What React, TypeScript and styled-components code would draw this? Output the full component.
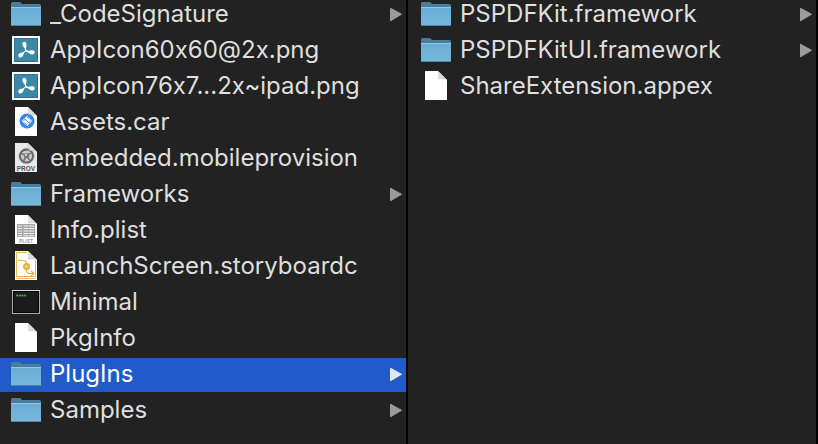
import React from "react";
import styled, { createGlobalStyle } from "styled-components";

const GlobalStyle = createGlobalStyle`
  body {
    margin: 0;
    background: #222222;
    overflow: hidden;
  }
`;

/* The browser is scrolled slightly past its first column and row. */
const Browser = styled.main`
  display: grid;
  grid-template-columns: 1fr 1fr;
  min-height: calc(100vh + 2px);
  margin: -2px 0 0 -2px;
  overflow: hidden;
  background: #222222;
  font-family: Inter, "Liberation Sans", sans-serif;
  font-feature-settings: "calt" 0;
`;

const Column = styled.ul`
  display: flex;
  flex-direction: column;
  gap: 2px;
  min-width: 0;
  margin: 0;
  padding: 0;
  list-style: none;
  border-right: 2px solid #000000;
`;

const Row = styled.button<{ $selected: boolean }>`
  display: flex;
  align-items: center;
  gap: 9px;
  box-sizing: border-box;
  width: 100%;
  height: 34px;
  padding: 0 4px 0 13px;
  border: 0;
  background: ${(p) => (p.$selected ? "#215ac9" : "transparent")};
  color: ${(p) => (p.$selected ? "#ffffff" : "#dfdfdf")};
  font: inherit;
  font-size: 24px;
  line-height: 32px;
  text-align: left;
`;

const IconSlot = styled.span`
  display: flex;
  flex: none;
  justify-content: center;
  width: 30px;

  svg {
    display: block;
  }
`;

const Name = styled.span`
  flex: 1;
  min-width: 0;
  height: 34px;
  overflow: hidden;
  white-space: nowrap;
`;

const Arrow = styled.svg<{ $selected: boolean }>`
  flex: none;
  fill: ${(p) => (p.$selected ? "#dfe7f8" : "#9b9b9b")};
`;

const FolderIcon = () => (
  <svg width="30" height="30" viewBox="0 0 30 30">
    <defs>
      <linearGradient id="folderFront" x1="0" y1="0" x2="0" y2="1">
        <stop offset="0" stopColor="#67add8" />
        <stop offset="1" stopColor="#7ab7da" />
      </linearGradient>
    </defs>
    <path d="M0 7V3.500Q0 2 1.500 2H8.500Q9.500 2 10.200 3L11 4H28.500Q30 4 30 5.500V9H0Z" fill="#4a7d9c" />
    <path d="M0 7H30V24.500Q30 26 28.500 26H1.500Q0 26 0 24.500Z" fill="url(#folderFront)" />
    <path d="M0 7.500H30" stroke="#8dc8e8" strokeWidth="1" />
    <path d="M0.500 25.500H29.500" stroke="#4c87a9" strokeWidth="1" />
  </svg>
);

const ImageIcon = () => (
  <svg width="28" height="30" viewBox="0 1 28 30">
    <rect y="1" width="28" height="28" fill="#ffffff" />
    <rect x="2" y="3" width="24" height="24" fill="#2f7391" />
    <rect x="3" y="4" width="22" height="22" fill="#3c88a9" />
    <g fill="#ffffff">
      <path d="M13.300 16.200C13.300 12.500 10.300 11.500 10.300 8.700C10.300 7.400 11.200 6.700 12.200 6.700C13.600 6.700 14.600 8 14.500 10C14.400 12 13.700 13.500 14.400 16Z" />
      <path d="M13.900 15.100C17 17 18.500 14.600 21 15.300C22.500 15.700 23.100 17 22.600 18.100C22 19.600 20.200 19.800 18.500 18.900C16.700 17.900 15.800 16.700 13.400 16.400Z" />
      <path d="M14.300 15.800C11.200 17.600 12.200 19.900 10.200 21.700C9 22.700 7.600 22.800 6.800 21.900C5.800 20.800 6.300 19 8.100 18.100C10 17.200 11.700 17.400 13.600 15.200Z" />
    </g>
  </svg>
);

const Page = ({ children, fill = "#ffffff" }: { children?: React.ReactNode; fill?: string }) => (
  <svg width="22" height="32" viewBox="0 1 22 32">
    <path d="M0 1H13L22 10V30H0Z" fill={fill} />
    {children}
    <path d="M13 1Q15 2.500 14.300 8.500Q20 7.500 22 11V10Z" fill="#dcdcdc" />
    <path d="M13.800 2V8.700H21" fill="none" stroke="#b5b5b5" strokeWidth="0.600" />
  </svg>
);

const PageLabel = styled.text`
  font-family: "Liberation Sans", sans-serif;
  font-weight: 700;
  text-anchor: middle;
`;

const CarIcon = () => (
  <Page>
    <circle cx="12" cy="15" r="7.500" fill="#3388f5" />
    <path d="M12 9.800L17.200 15L12 20.200L6.800 15Z" fill="#ffffff" />
    <path d="M9.500 12.600L12 15.100M12 10.800L14.500 13.300M9.500 16.800L12 19.200M12 15L14.500 17.500M8 15.500L10.500 13M13.500 17L16 14.500" fill="none" stroke="#3388f5" strokeWidth="0.900" />
  </Page>
);

const ProvisionIcon = () => (
  <Page fill="#e9e9e9">
    <circle cx="11.500" cy="14" r="6.600" fill="#c9c9c9" stroke="#666666" strokeWidth="2" />
    <circle cx="11.500" cy="14" r="7.800" fill="none" stroke="#a0a0a0" strokeWidth="0.600" />
    <path d="M6 11.500L11 13.300L16.500 11M11.300 14L8.500 19M11.500 14L15 18.500" fill="none" stroke="#777777" strokeWidth="1.600" />
    <circle cx="11.500" cy="13.700" r="2.500" fill="#777777" />
    <circle cx="11" cy="13" r="1.100" fill="#dddddd" />
    <PageLabel x="11" y="28.500" fontSize="6.500" fill="#555555">PROV</PageLabel>
  </Page>
);

const PlistIcon = () => (
  <Page>
    <rect x="2" y="10" width="18" height="13" fill="#a5a5a5" />
    <path d="M3 12H7M8.500 12H19M3 14.500H7M8.500 14.500H19M3 17H7M8.500 17H19M3 19.500H7M8.500 19.500H19M3 21.800H7M8.500 21.800H19" stroke="#f5f5f5" strokeWidth="1" />
    <path d="M13.500 10V23" stroke="#a5a5a5" strokeWidth="0.500" />
    <PageLabel x="11" y="28.500" fontSize="5" fill="#a0a0a0">PLIST</PageLabel>
  </Page>
);

const StoryboardIcon = () => (
  <Page>
    <path d="M12.500 2.500H1.500V26.500H20.500V10" fill="none" stroke="#e5b84b" strokeWidth="1" />
    <path d="M1 28.500H21" stroke="#e9c46b" strokeWidth="1" />
    <path d="M3 10.500H8Q11.500 10.500 11.500 14V20Q11.500 23.500 14 23.500H18.500M16 21L18.800 23.500L16 26" fill="none" stroke="#e8b132" strokeWidth="1.200" />
    <circle cx="11.500" cy="16.500" r="3.500" fill="#e8b132" />
    <circle cx="11.500" cy="16.500" r="1.300" fill="#f6dc9b" />
  </Page>
);

const ExecutableIcon = () => (
  <svg width="28" height="30" viewBox="0 1 28 30">
    <rect x="0.500" y="3.500" width="27" height="23" fill="#1b1b1b" stroke="#a4adb0" />
    <path d="M0 3.500H28" stroke="#d0dfe5" />
    <rect x="1.500" y="4.500" width="25" height="21" fill="none" stroke="#050505" />
    <path d="M4 8.500H14.500" stroke="#398d38" strokeWidth="2" strokeDasharray="2 0.700" />
    <path d="M5 8.500H14" stroke="#66c463" strokeWidth="0.800" strokeDasharray="1 1.600" />
  </svg>
);

const icons = {
  folder: FolderIcon,
  image: ImageIcon,
  page: Page,
  car: CarIcon,
  provision: ProvisionIcon,
  plist: PlistIcon,
  storyboard: StoryboardIcon,
  executable: ExecutableIcon,
};

interface Entry {
  name: string;
  icon: keyof typeof icons;
  selected?: boolean;
}

const bundle: Entry[] = [
  { name: "_CodeSignature", icon: "folder" },
  { name: "AppIcon60x60@2x.png", icon: "image" },
  { name: "AppIcon76x7...2x~ipad.png", icon: "image" },
  { name: "Assets.car", icon: "car" },
  { name: "embedded.mobileprovision", icon: "provision" },
  { name: "Frameworks", icon: "folder" },
  { name: "Info.plist", icon: "plist" },
  { name: "LaunchScreen.storyboardc", icon: "storyboard" },
  { name: "Minimal", icon: "executable" },
  { name: "PkgInfo", icon: "page" },
  { name: "PlugIns", icon: "folder", selected: true },
  { name: "Samples", icon: "folder" },
];

const plugins: Entry[] = [
  { name: "PSPDFKit.framework", icon: "folder" },
  { name: "PSPDFKitUI.framework", icon: "folder" },
  { name: "ShareExtension.appex", icon: "page" },
];

const EntryRow = ({ name, icon, selected = false }: Entry) => {
  const Icon = icons[icon];
  return (
    <li>
      <Row type="button" $selected={selected} aria-pressed={selected}>
        <IconSlot aria-hidden="true">
          <Icon />
        </IconSlot>
        <Name>{name}</Name>
        {icon === "folder" && (
          <Arrow $selected={selected} width="12" height="16" viewBox="0 0 12 16" aria-hidden="true">
            <path d="M0 1.500Q0 0.500 1 1L11.500 6.700Q12.300 7.200 11.500 7.700L1 14Q0 14.500 0 13.500Z" />
          </Arrow>
        )}
      </Row>
    </li>
  );
};

export default function App() {
  return (
    <>
      <GlobalStyle />
      <Browser>
        {[bundle, plugins].map((entries, i) => (
          <Column key={i}>
            {entries.map((entry) => (
              <EntryRow key={entry.name} {...entry} />
            ))}
          </Column>
        ))}
      </Browser>
    </>
  );
}
